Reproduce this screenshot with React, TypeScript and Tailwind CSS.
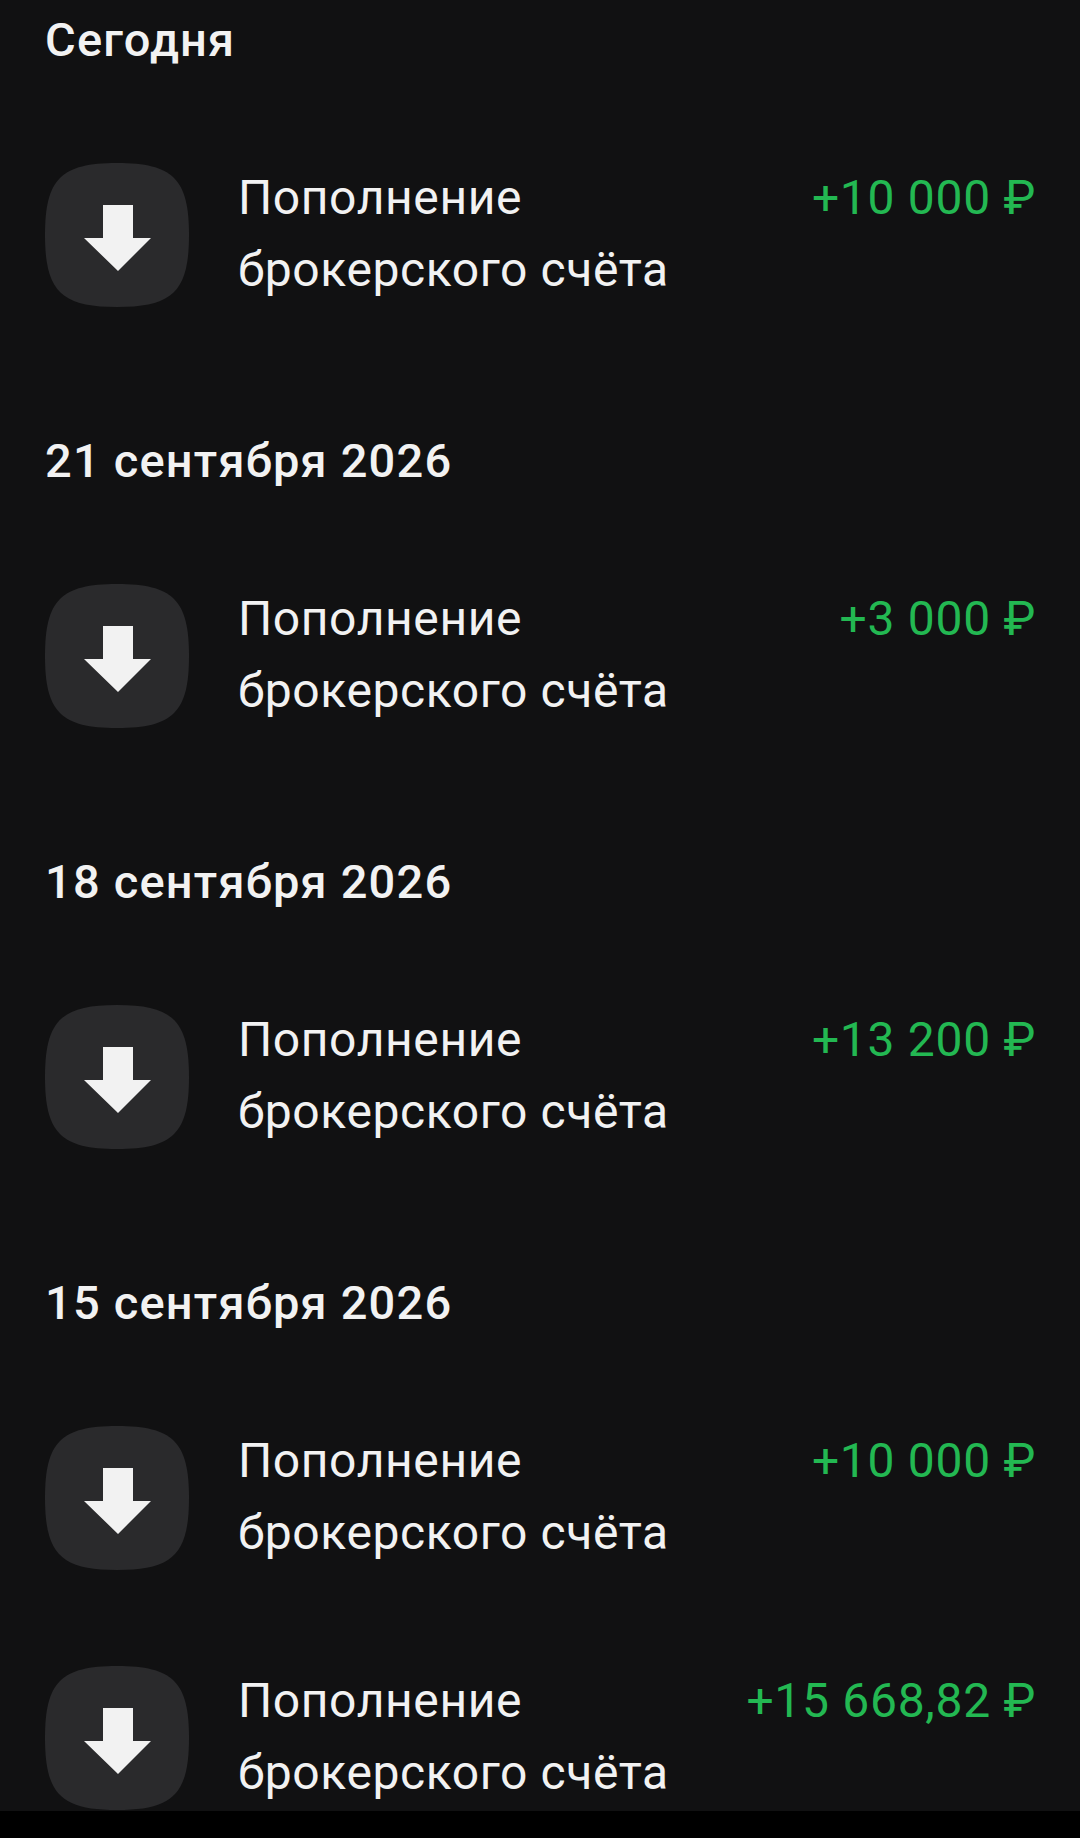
const GROUPS = [
  { date: 'Сегодня', amounts: ['+10 000 ₽'] },
  { date: '21 сентября 2026', amounts: ['+3 000 ₽'] },
  { date: '18 сентября 2026', amounts: ['+13 200 ₽'] },
  { date: '15 сентября 2026', amounts: ['+10 000 ₽', '+15 668,82 ₽'] },
];

const DepositIcon = () => (
  <svg width="144" height="144" viewBox="0 0 144 144" className="shrink-0">
    <path d="M72 0C128 0 144 16 144 72C144 128 128 144 72 144C16 144 0 128 0 72C0 16 16 0 72 0Z" fill="#2a2a2c" />
    <path d="M58 42H88V75H106L73 108L39 75H58Z" fill="#f2f2f2" />
  </svg>
);

const Row = ({ amount }: { amount: string }) => (
  <div className="flex items-start">
    <DepositIcon />
    <div className="ml-[49px] flex-1 text-[48px] leading-[72px] tracking-[0.6px] text-[#f2f2f2]">
      <div className="-mt-[1px]">Пополнение</div>
      <div>брокерского счёта</div>
    </div>
    <div className="-mt-[1px] text-[48px] leading-[72px] tracking-[0.7px] text-[#23b852]">{amount}</div>
  </div>
);

export default function App() {
  return (
    <div className="h-[1838px] w-[1080px] overflow-hidden bg-black font-['Roboto',sans-serif]">
      <div className="h-[1811px] overflow-hidden bg-[#111112] pl-[45px] pr-[44px]">
        {GROUPS.map((group) => (
          <section key={group.date} className="mb-[114px]">
            <h2 className="flex h-[80px] items-center text-[47px] font-medium tracking-[1.2px] text-[#f2f2f2]">{group.date}</h2>
            <div className="mt-[83px] flex flex-col gap-[96px]">
              {group.amounts.map((amount, i) => (
                <Row key={i} amount={amount} />
              ))}
            </div>
          </section>
        ))}
      </div>
    </div>
  );
}
